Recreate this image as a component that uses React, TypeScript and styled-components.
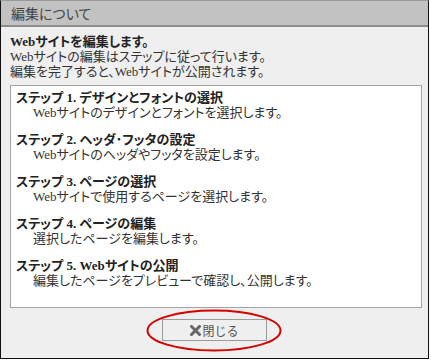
import React from "react";
import styled, { createGlobalStyle } from "styled-components";

interface Step {
    no: number;
    title: string;
    text: string;
}

const steps: Step[] = [
    { no: 1, title: "デザインとフォントの選択", text: "Webサイトのデザインとフォントを選択します。" },
    { no: 2, title: "ヘッダ･フッタの設定", text: "Webサイトのヘッダやフッタを設定します。" },
    { no: 3, title: "ページの選択", text: "Webサイトで使用するページを選択します。" },
    { no: 4, title: "ページの編集", text: "選択したページを編集します。" },
    { no: 5, title: "Webサイトの公開", text: "編集したページをプレビューで確認し、公開します。" },
];

const GlobalStyle = createGlobalStyle`
    body {
        margin: 0;
        background: #fff;
    }
`;

const Frame = styled.div`
    width: 429px;
    height: 359px;
    box-sizing: border-box;
    border: 1px solid #111;
    border-top: 1px solid #9a9a9a;
    background: #efefef;
    display: flex;
    flex-direction: column;
    font-family: "Liberation Serif", "Noto Sans CJK JP", serif;
    font-size: 13px;
    font-feature-settings: "palt";
    color: #333;
`;

const TitleBar = styled.div`
    height: 24px;
    line-height: 24px;
    padding-left: 10px;
    background: #c2c2c2;
    border-bottom: 2px solid #8d8d8d;
    font-family: "Noto Sans CJK JP", sans-serif;
    font-size: 14px;
    color: #444;
`;

const Content = styled.div`
    padding: 7px 6px 0 9px;
`;

const Intro = styled.div`
    line-height: 15px;
    margin-bottom: 6px;
`;

const Lead = styled.div`
    font-weight: bold;
    color: #222;
`;

const StepBox = styled.div`
    height: 223px;
    box-sizing: border-box;
    border: 1px solid #a3a3a3;
    background: #fff;
    padding: 4px 5px 0;
    display: flex;
    flex-direction: column;
    gap: 12px;
`;

const StepItem = styled.div`
    line-height: 15px;
`;

const StepTitle = styled.div`
    font-weight: bold;
    color: #222;
`;

const StepText = styled.div`
    padding-left: 17px;
`;

const Footer = styled.div`
    flex: 1;
    display: flex;
    justify-content: center;
    padding-top: 11px;
`;

const ButtonWrap = styled.div`
    position: relative;
    width: 105px;
    height: 22px;
`;

const CloseButton = styled.button`
    width: 105px;
    height: 22px;
    box-sizing: border-box;
    border: 1px solid #9b9b9b;
    background: #efefef;
    display: flex;
    align-items: center;
    justify-content: center;
    gap: 1px;
    padding: 0;
    font-family: "Noto Sans CJK JP", sans-serif;
    font-size: 12px;
    color: #555;
`;

const Ring = styled.svg`
    position: absolute;
    left: -16px;
    top: -10px;
    pointer-events: none;
`;

function CrossIcon() {
    return (
        <svg width="11" height="11" viewBox="0 0 11 11">
            <path d="M1.5 1.5 L9.5 9.5 M9.5 1.5 L1.5 9.5" stroke="#666" strokeWidth="3" strokeLinecap="square" />
        </svg>
    );
}

export default function App() {
    return (
        <>
            <GlobalStyle />
            <Frame>
                <TitleBar>編集について</TitleBar>
                <Content>
                    <Intro>
                        <Lead>Webサイトを編集します。</Lead>
                        <div>Webサイトの編集はステップに従って行います。</div>
                        <div>編集を完了すると、Webサイトが公開されます。</div>
                    </Intro>
                    <StepBox>
                        {steps.map((step) => (
                            <StepItem key={step.no}>
                                <StepTitle>
                                    ステップ {step.no}. {step.title}
                                </StepTitle>
                                <StepText>{step.text}</StepText>
                            </StepItem>
                        ))}
                    </StepBox>
                </Content>
                <Footer>
                    <ButtonWrap>
                        <CloseButton>
                            <CrossIcon />
                            閉じる
                        </CloseButton>
                        <Ring width="136" height="43" viewBox="0 0 136 43">
                            <ellipse cx="68" cy="21.5" rx="66.5" ry="20" fill="none" stroke="#d40000" strokeWidth="2" />
                        </Ring>
                    </ButtonWrap>
                </Footer>
            </Frame>
        </>
    );
}
